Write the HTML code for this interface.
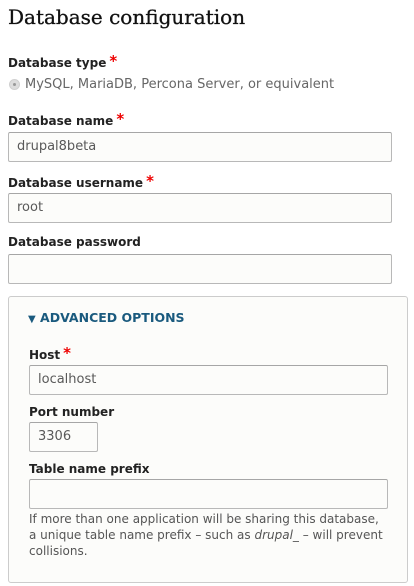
<!DOCTYPE html>
<html><head><style>
body{margin:0;width:414px;height:586px;background:#fff;font-family:"DejaVu Sans","Liberation Sans",sans-serif;color:#222;position:relative;overflow:hidden}
.a{position:absolute;white-space:nowrap}
h1{position:absolute;left:8px;top:5px;margin:0;font-family:"DejaVu Serif","Liberation Serif",serif;font-weight:normal;font-size:20px;color:#111;-webkit-text-stroke:0.3px #111}
.l{position:absolute;font-weight:bold;font-size:12px;color:#222;white-space:nowrap}
.s{color:#e00;font-size:15px;line-height:1;position:relative;top:-1px;margin-left:3px}
.i{position:absolute;box-sizing:border-box;border:1px solid #b8b8b8;border-top-color:#a6a6a6;background:#fcfcfa;border-radius:2px;font-size:13px;color:#595959;padding:0 0 0 8px;line-height:28px;height:30px}
.fs{position:absolute;left:8px;top:296px;width:400px;height:287px;box-sizing:border-box;border:1px solid #ccc;border-radius:3px;background:#fcfcfa}
</style></head><body>
<h1>Database configuration</h1>
<div class="l" style="left:8px;top:55px">Database type<span class="s">*</span></div>
<div class="a" style="left:9px;top:79px;width:9px;height:9px;border-radius:50%;background:#ddd;border:1px solid #d0d0d0"></div>
<div class="a" style="left:13px;top:83px;width:3px;height:3px;border-radius:50%;background:#999"></div>
<div class="a" style="left:25px;top:77px;font-size:13px;color:#666">MySQL, MariaDB, Percona Server, or equivalent</div>
<div class="l" style="left:8px;top:113px">Database name<span class="s">*</span></div>
<div class="i" style="left:8px;top:132px;width:384px">drupal8beta</div>
<div class="l" style="left:8px;top:175px">Database username<span class="s">*</span></div>
<div class="i" style="left:8px;top:193px;width:384px">root</div>
<div class="l" style="left:8px;top:235px">Database password</div>
<div class="i" style="left:8px;top:254px;width:384px"></div>
<div class="fs"></div>
<div class="a" style="left:28px;top:310px;font-size:12.5px;font-weight:bold;color:#1a5a7e"><span style="font-size:10px">▼</span> ADVANCED OPTIONS</div>
<div class="l" style="left:29px;top:347px">Host<span class="s">*</span></div>
<div class="i" style="left:29px;top:365px;width:359px">localhost</div>
<div class="l" style="left:29px;top:405px">Port number</div>
<div class="i" style="left:29px;top:422px;width:69px">3306</div>
<div class="l" style="left:29px;top:462px">Table name prefix</div>
<div class="i" style="left:29px;top:479px;width:359px"></div>
<div class="a" style="left:29px;top:511px;font-size:12px;line-height:16px;color:#555">If more than one application will be sharing this database,<br>a unique table name prefix – such as <i>drupal_</i> – will prevent<br>collisions.</div>
</body></html>
